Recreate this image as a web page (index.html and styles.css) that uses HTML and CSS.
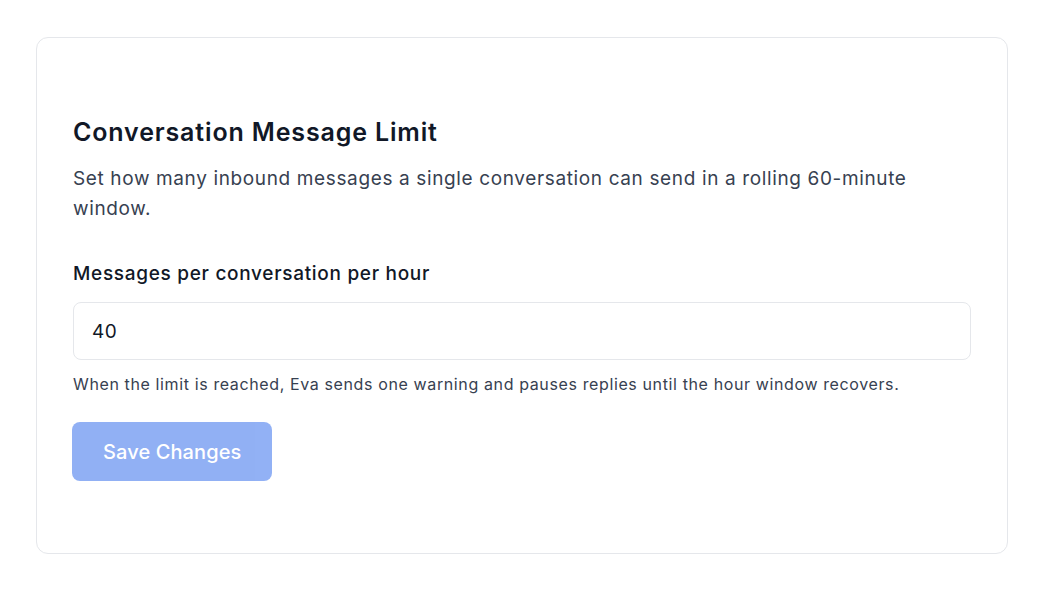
FILE: index.html
```html
<!DOCTYPE html>
<html lang="en">
<head>
    <meta charset="UTF-8">
    <meta name="viewport" content="width=device-width, initial-scale=1.0">
    <title>Conversation Message Limit</title>
    <link rel="stylesheet" href="styles.css">
</head>
<body>
    <div class="card">
        <h2 class="card-title">Conversation Message Limit</h2>
        <p class="card-desc">Set how many inbound messages a single conversation can send in a rolling 60-minute window.</p>
        <form class="limit-form">
            <div class="form-group">
                <label for="limit">Messages per conversation per hour</label>
                <input type="number" id="limit" name="limit" value="40">
                <p class="hint">When the limit is reached, Eva sends one warning and pauses replies until the hour window recovers.</p>
            </div>
            <button type="button" class="save-btn" disabled>Save Changes</button>
        </form>
    </div>
</body>
</html>
```

FILE: styles.css
```css
* {
    box-sizing: border-box;
}
body {
    font-family: Inter, "Noto Sans", sans-serif;
    background-color: #fff;
    margin: 0;
    padding: 37px 36px;
    color: #111827;
}
.card {
    border: 1px solid #e5e7eb;
    border-radius: 12px;
    background-color: #fff;
    padding: 78px 36px 72px;
}
.card-title {
    margin: 0;
    font-size: 25px;
    line-height: 32px;
    font-weight: 600;
    letter-spacing: 0.85px;
    color: #111827;
}
.card-desc {
    margin: 16px 0 0;
    font-size: 19px;
    line-height: 30px;
    letter-spacing: 0.63px;
    color: #374151;
}
.limit-form {
    margin-top: 36px;
}
.form-group label {
    display: block;
    font-size: 19px;
    line-height: 28px;
    font-weight: 500;
    letter-spacing: 0.7px;
    color: #111827;
    margin-bottom: 14px;
}
.form-group input {
    display: block;
    width: 100%;
    height: 58px;
    padding: 0 18px;
    border: 1px solid #e5e7eb;
    border-radius: 8px;
    font-family: inherit;
    font-size: 19px;
    letter-spacing: 0.5px;
    color: #111827;
    outline: none;
    -moz-appearance: textfield;
}
.form-group input::-webkit-outer-spin-button,
.form-group input::-webkit-inner-spin-button {
    -webkit-appearance: none;
    margin: 0;
}
.hint {
    margin: 12px 0 0;
    font-size: 16px;
    line-height: 24px;
    letter-spacing: 0.62px;
    color: #374151;
}
.save-btn {
    margin-top: 26px;
    margin-left: -1px;
    height: 59px;
    padding: 0 31px;
    border: none;
    border-radius: 8px;
    background-color: #2563eb;
    opacity: 0.5;
    color: #fff;
    font-family: inherit;
    font-size: 20px;
    font-weight: 500;
    letter-spacing: 0.1px;
}
```
